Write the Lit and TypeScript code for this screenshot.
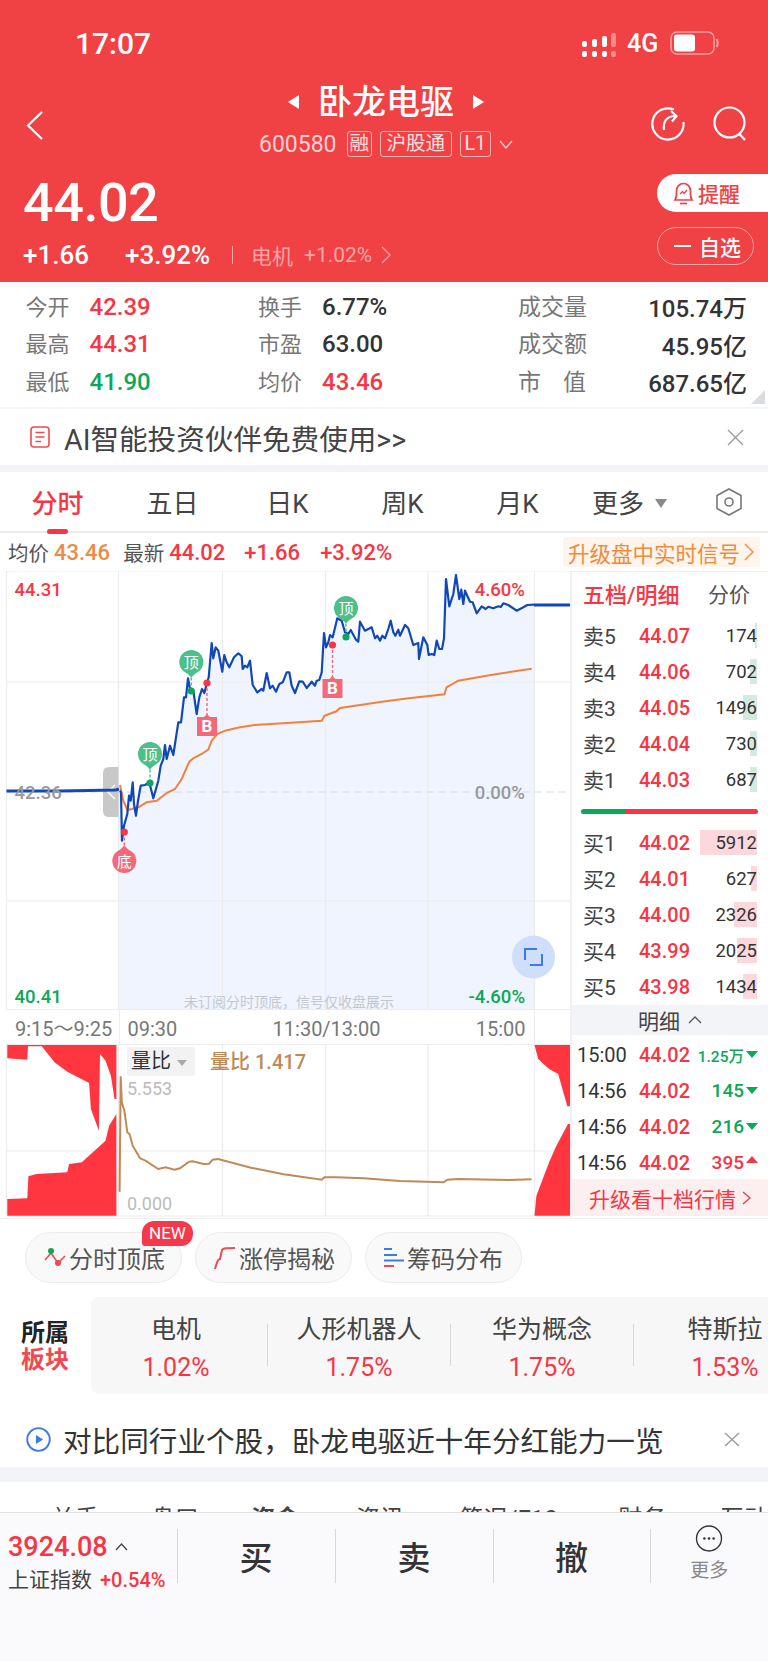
import { LitElement, css, html, svg } from 'lit'
import { customElement } from 'lit/decorators.js'

type Pt = [number, number]

// points were read from crops, each crop has its own origin and 3x scale
const seg = (ox: number, oy: number, pts: Pt[]): Pt[] => pts.map(([x, y]) => [ox + x / 3, oy + y / 3 - 572] as Pt)
const wide = (pts: Pt[], top: number): Pt[] => pts.map(([x, y]) => [x / 2.75, top + y / 3] as Pt)
const line = (pts: Pt[]) => 'M' + pts.map(([x, y]) => `${x.toFixed(1)} ${y.toFixed(1)}`).join('L')

const bluePts: Pt[] = [
  ...seg(110, 620, [[30, 515], [33, 520], [36, 665], [42, 620], [52, 585], [57, 530], [62, 545], [68, 490], [72, 555], [78, 590], [84, 545], [92, 500], [105, 498], [118, 490], [130, 538], [145, 485], [152, 440], [160, 420], [165, 378], [170, 420], [180, 380], [190, 408], [205, 310], [213, 310], [222, 235], [228, 235], [234, 178], [240, 210], [250, 215], [260, 285], [268, 235], [276, 210], [283, 222], [290, 195], [296, 175], [305, 72], [310, 118], [317, 85], [325, 95], [337, 158], [343, 108], [350, 130], [358, 145], [372, 115], [385, 103]]),
  ...seg(200, 620, [[125, 112], [128, 150], [135, 140], [142, 145], [150, 125], [158, 198], [172, 220], [185, 210], [190, 215], [200, 162], [210, 208], [218, 200], [228, 218], [238, 195], [248, 190], [260, 160], [268, 160], [275, 200], [285, 222], [298, 187], [308, 188], [320, 207], [335, 188], [345, 200], [350, 185], [358, 183], [365, 160], [372, 42], [378, 85], [385, 70]]),
  ...seg(320, 570, [[30, 198], [38, 205], [52, 148], [65, 155], [75, 190], [85, 195], [92, 183], [108, 212], [115, 218], [120, 158], [135, 185], [155, 175], [165, 208], [172, 200], [180, 215], [187, 200], [195, 208], [205, 180], [212, 155], [220, 190], [226, 200], [235, 182], [240, 200], [255, 168], [265, 178], [280, 228], [295, 222], [297, 270], [310, 205], [322, 228], [326, 258], [335, 255], [343, 258], [350, 215], [358, 240], [366, 240]]),
  ...seg(420, 570, [[72, 208], [78, 30], [88, 112], [100, 75], [108, 18], [118, 90], [124, 62], [130, 105], [135, 65], [150, 98], [158, 100], [170, 133], [185, 112], [197, 120], [205, 113], [220, 118], [235, 112], [242, 114], [250, 103], [265, 108], [290, 125], [310, 115], [322, 108], [342, 107]]),
]

const orangePts: Pt[] = [
  ...seg(110, 620, [[30, 498], [40, 545], [52, 573], [65, 570], [85, 565], [110, 550], [140, 545], [170, 522], [195, 510], [215, 480], [238, 428], [250, 418], [275, 405], [295, 392], [305, 365], [322, 345], [345, 335], [390, 325]]),
  ...wide([[700, 483], [800, 476], [885, 470], [892, 455], [925, 442], [935, 432], [990, 423], [1060, 412], [1130, 402], [1222, 391], [1228, 370], [1260, 350], [1350, 333], [1462, 314]], -7),
]

const ratioPts = wide([[329, 578], [332, 232], [335, 310], [342, 335], [350, 400], [356, 405], [365, 440], [385, 478], [400, 485], [435, 510], [455, 505], [480, 512], [495, 508], [520, 488], [530, 487], [560, 495], [575, 494], [585, 482], [600, 480], [690, 506], [780, 526], [885, 542], [892, 535], [925, 535], [1000, 538], [1100, 546], [1220, 550], [1230, 542], [1260, 540], [1400, 543], [1462, 541]], -45)

const volumeShapes: Pt[][] = [
  [[20, 138], [20, 178], [75, 182], [77, 142], [115, 142], [150, 190], [185, 218], [245, 252], [250, 330], [272, 395], [275, 165], [290, 185], [305, 230], [315, 300], [320, 300], [320, 138]],
  [[20, 650], [20, 600], [75, 598], [78, 532], [100, 525], [185, 520], [190, 495], [225, 490], [260, 455], [290, 425], [300, 380], [320, 345], [320, 650]],
  [[1470, 138], [1568, 138], [1568, 322], [1560, 322], [1535, 225], [1510, 210], [1480, 180]],
  [[1470, 650], [1475, 590], [1510, 490], [1530, 440], [1562, 375], [1568, 375], [1568, 650]],
]

const stats = [
  ['今开', '42.39', 'up', '换手', '6.77%', '', '成交量', '105.74万'],
  ['最高', '44.31', 'up', '市盈', '63.00', '', '成交额', '45.95亿'],
  ['最低', '41.90', 'down', '均价', '43.46', 'up', '市值', '687.65亿'],
]

const sells = [
  ['卖5', '44.07', '174', 2],
  ['卖4', '44.06', '702', 7],
  ['卖3', '44.05', '1496', 14],
  ['卖2', '44.04', '730', 7],
  ['卖1', '44.03', '687', 7],
]
const buys = [
  ['买1', '44.02', '5912', 57],
  ['买2', '44.01', '627', 6],
  ['买3', '44.00', '2326', 23],
  ['买4', '43.99', '2025', 20],
  ['买5', '43.98', '1434', 14],
]
const ticks = [
  ['15:00', '1.25万', 'down', true],
  ['14:56', '145', 'down', false],
  ['14:56', '216', 'down', false],
  ['14:56', '395', 'up', false],
]
const sectors = [
  ['电机', '1.02%'],
  ['人形机器人', '1.75%'],
  ['华为概念', '1.75%'],
  ['特斯拉', '1.53%'],
]
const lowerTabs = ['关手', '盘口', '资金', '资讯', '简况/F10', '财务', '互动']

const pin = (x: number, cy: number, dot: number, label: string, color: string, dotColor: string) => {
  const up = dot > cy
  const tip = up ? cy + 15.5 : cy - 15.5
  return svg`
    <line x1=${x} y1=${tip} x2=${x} y2=${dot} stroke=${color} stroke-width="1.4" stroke-dasharray="3 2"></line>
    <circle cx=${x} cy=${dot} r="3.6" fill=${dotColor}></circle>
    <circle cx=${x} cy=${cy} r="12" fill=${color}></circle>
    <path d="M${x - 5} ${cy + (up ? 10.5 : -10.5)}L${x} ${tip}L${x + 5} ${cy + (up ? 10.5 : -10.5)}Z" fill=${color}></path>
    <text class="pin" x=${x} y=${cy + 5.5}>${label}</text>`
}

const flag = (x: number, top: number, dot: number) => svg`
  <line x1=${x} y1=${dot} x2=${x} y2=${top} stroke="#f4697a" stroke-width="1.4" stroke-dasharray="3 2"></line>
  <circle cx=${x} cy=${dot} r="3.6" fill="#f73545"></circle>
  <path d="M${x - 10} ${top + 1}H${x - 3}L${x} ${top - 2}L${x + 3} ${top + 1}H${x + 10}V${top + 20}H${x - 10}Z" fill="#f4697a"></path>
  <text class="pin b" x=${x} y=${top + 16}>B</text>`

@customElement('app-root')
class AppRoot extends LitElement {
  renderChart() {
    const y = (v: number) => v - 572
    const area = line(bluePts) + `L534.5 439L118.5 439L118.5 ${bluePts[0][1].toFixed(1)}Z`
    return html`
      <svg class="plot" viewBox="0 0 570 439" width="570" height="439">
        <path d=${area} fill="#eff4fe"></path>
        <g stroke="#ececec" stroke-width="1.2">
          <path d="M6.5 0V439M118.5 0V439M222.5 0V439M325.5 0V439M428 0V439M534.5 0V439" fill="none"></path>
          <path d="M6.5 0H570M6.5 ${y(683)}H570M6.5 ${y(902)}H570M6.5 438.5H570" fill="none"></path>
        </g>
        <path d="M6.5 ${y(793)}H570" stroke="#cfdbe8" stroke-width="1.2" stroke-dasharray="7 5"></path>
        <path d="M103 ${y(774)}q0 -6 6 -6h9.5v50h-9.5q-6 0 -6 -6Z" fill="#c8c8c8"></path>
        <path d="M115 ${y(786)}l-7 7l7 7" fill="none" stroke="#fff" stroke-width="1.4"></path>
        <path d=${line(orangePts)} fill="none" stroke="#f77f3c" stroke-width="2"></path>
        <path d=${line(bluePts)} fill="none" stroke="#1148b8" stroke-width="2.2" stroke-linejoin="round"></path>
        <path d="M6.5 ${y(792)}L60 ${y(792)}L116 ${y(791)}L119 ${y(790)}M534 ${y(606)}H570" fill="none" stroke="#1148b8" stroke-width="3.2"></path>
        ${pin(150, y(755), y(784), '顶', '#4cbf8b', '#0aa858')}
        ${pin(191.3, y(663), y(692), '顶', '#4cbf8b', '#0aa858')}
        ${pin(346, y(609), y(638), '顶', '#4cbf8b', '#0aa858')}
        ${pin(124.3, y(862), y(833), '底', '#f4697a', '#f73545')}
        ${flag(207, y(717), y(684))}
        ${flag(332.5, y(679), y(646))}
        <circle cx="533.5" cy=${y(958)} r="21.5" fill="#cfdffb"></circle>
        <path d="M525 ${y(961)}V${y(950)}H537M542 ${y(955)}V${y(966)}H530" fill="none" stroke="#3a7be8" stroke-width="2"></path>
      </svg>
      <span class="tag up" style="left:14.5px;top:7px">44.31</span>
      <span class="tag gray" style="left:14.5px;top:210px">42.36</span>
      <span class="tag down" style="left:14.5px;top:414px">40.41</span>
      <span class="tag up end" style="top:7px">4.60%</span>
      <span class="tag gray end" style="top:210px">0.00%</span>
      <span class="tag down end" style="top:414px">-4.60%</span>
      <span class="hint">未订阅分时顶底，信号仅收盘展示</span>
    `
  }

  renderVolume() {
    return html`
      <svg class="plot" viewBox="0 0 570 173" width="570" height="173">
        <g stroke="#ececec" stroke-width="1.2" fill="none">
          <path d="M6.5 0V172M118.5 0V172M222.5 0V172M325.5 0V172M428 0V172M534.5 0V172"></path>
          <path d="M6.5 0.5H570M6.5 107H570M6.5 172H570"></path>
        </g>
        ${volumeShapes.map(
          s => svg`<path d=${line(wide(s, -45)) + 'Z'} fill="#ff363f"></path>`
        )}
        <path d=${line(ratioPts)} fill="none" stroke="#c08a55" stroke-width="2"></path>
      </svg>
      <div class="ratio-chip">量比<i></i></div>
      <span class="ratio-value">量比 1.417</span>
      <span class="ratio-tick" style="top:35px">5.553</span>
      <span class="ratio-tick" style="top:150px">0.000</span>
    `
  }

  renderQuote(rows: any[]) {
    return rows.map(
      r => html`<div class="quote">
        <i class=${r[0][0] === '卖' ? 'depth sell' : 'depth buy'} style="width:${r[3]}px"></i>
        <span class="q-label">${r[0]}</span>
        <span class="q-price">${r[1]}</span>
        <span class="q-vol">${r[2]}</span>
      </div>`
    )
  }

  render() {
    return html`
      <header>
        <div class="status">
          <span class="time">17:07</span>
          <svg class="signal" width="34" height="26" viewBox="0 0 34 26" fill="#fff">
            <rect x="0" y="8" width="5" height="6" rx="2"></rect>
            <rect x="0" y="18" width="5" height="6" rx="2"></rect>
            <rect x="10" y="6" width="5" height="8" rx="2"></rect>
            <rect x="10" y="18" width="5" height="6" rx="2"></rect>
            <rect x="20" y="3" width="5" height="11" rx="2"></rect>
            <rect x="20" y="18" width="5" height="6" rx="2"></rect>
            <rect x="29" y="0" width="5" height="14" rx="2" fill="#f78a8c"></rect>
            <rect x="29" y="18" width="5" height="6" rx="2" fill="#f78a8c"></rect>
          </svg>
          <span class="net">4G</span>
          <svg class="battery" width="50" height="24" viewBox="0 0 50 24">
            <rect x="1" y="1" width="43" height="22" rx="6" fill="none" stroke="#f8a0a2" stroke-width="1.5"></rect>
            <rect x="4" y="3.5" width="21" height="17" rx="3" fill="#fff"></rect>
            <path d="M46.5 8q2.5 4 0 8" fill="none" stroke="#f8a0a2" stroke-width="2"></path>
          </svg>
        </div>
        <div class="nav">
          <svg class="back" width="18" height="29" viewBox="0 0 18 29" fill="none" stroke="#fff" stroke-width="2.2">
            <path d="M16 1L2 14.5L16 28"></path>
          </svg>
          <div class="name-box">
            <div class="name">
              <i class="arrow a-left"></i>
              <span>卧龙电驱</span>
              <i class="arrow a-right"></i>
            </div>
            <div class="code">
              <span class="code-num">600580</span>
              <span class="code-tag">融</span>
              <span class="code-tag t3">沪股通</span>
              <span class="code-tag t1">L1</span>
              <svg width="14" height="9" viewBox="0 0 14 9" fill="none" stroke="#fbd0d1" stroke-width="1.3">
                <path d="M1 1L7 8L13 1"></path>
              </svg>
            </div>
          </div>
          <div class="nav-tools">
            <svg width="36" height="36" viewBox="0 0 36 36" fill="none" stroke="#fff" stroke-width="2.2">
              <path d="M24 3.6A15.6 15.6 0 1 0 33.4 16"></path>
              <path d="M14 24C13 16 16 10.5 25 10"></path>
              <path d="M21 5L26.5 10L22 15.5"></path>
            </svg>
            <svg width="36" height="36" viewBox="0 0 36 36" fill="none" stroke="#fff" stroke-width="2.2">
              <circle cx="17.5" cy="16.5" r="15"></circle>
              <path d="M27.5 28L33 34"></path>
            </svg>
          </div>
        </div>
        <div class="price-row">
          <div>
            <div class="price">44.02</div>
            <div class="change">
              <span class="c1">+1.66</span>
              <span class="c2">+3.92%</span>
              <i class="c-sep"></i>
              <span class="c3">电机</span>
              <span class="c4">+1.02%</span>
              <svg width="10" height="18" viewBox="0 0 10 18" fill="none" stroke="#f8a5a6" stroke-width="1.3">
                <path d="M1 1L9 9L1 17"></path>
              </svg>
            </div>
          </div>
          <div class="actions">
            <div class="remind">
              <svg width="21" height="23" viewBox="0 0 21 23" fill="none" stroke="#f04144" stroke-width="1.7">
                <path d="M2 18C4 15 3.5 11 3.5 9C3.5 4.5 6.5 1.5 10.5 1.5S17.5 4.5 17.5 9C17.5 11 17 15 19 18Z"></path>
                <path d="M7 21.5H14"></path>
                <path d="M7 12L9.5 9.5L11 11.5L14 8" stroke-width="1.2"></path>
              </svg>
              提醒
            </div>
            <div class="watch"><i></i>自选</div>
          </div>
        </div>
      </header>

      <section class="stats">
        ${stats.map(
          s => html`<div class="stat-row">
            <div class="stat"><span class="s-label">${s[0]}</span><span class="s-val ${s[2]}">${s[1]}</span></div>
            <div class="stat"><span class="s-label">${s[3]}</span><span class="s-val ${s[5]}">${s[4]}</span></div>
            <div class="stat third">
              <span class="s-label wide">${s[6] === '市值' ? html`<b>市</b><b>值</b>` : s[6]}</span>
              <span class="s-val">${s[7]}</span>
            </div>
          </div>`
        )}
        <i class="corner"></i>
      </section>

      <div class="notice ai">
        <svg width="20" height="22" viewBox="0 0 20 22" fill="none" stroke="#f04a50" stroke-width="1.6">
          <rect x="1" y="1" width="18" height="20" rx="3"></rect>
          <path d="M5.5 6.5H14.5M5.5 11H14.5M5.5 15.5H11"></path>
        </svg>
        <span class="grow">AI智能投资伙伴免费使用>></span>
        <svg class="close" width="17" height="17" viewBox="0 0 17 17" stroke="#999" stroke-width="1.3">
          <path d="M1 1L16 16M16 1L1 16"></path>
        </svg>
      </div>
      <div class="band b7"></div>

      <nav class="tabs">
        <span class="tab on">分时</span>
        <span class="tab">五日</span>
        <span class="tab">日K</span>
        <span class="tab">周K</span>
        <span class="tab">月K</span>
        <span class="more">更多<i></i></span>
        <svg class="hex" width="26" height="28" viewBox="0 0 26 28" fill="none" stroke="#777" stroke-width="1.6">
          <path d="M13 1L25 7.5V20.5L13 27L1 20.5V7.5Z"></path>
          <circle cx="13" cy="14" r="4"></circle>
        </svg>
      </nav>

      <div class="summary">
        <span class="lab">均价</span><span class="num or">43.46</span>
        <span class="lab gap">最新</span><span class="num up">44.02</span>
        <span class="num up g1">+1.66</span>
        <span class="num up g2">+3.92%</span>
        <span class="signal-up">升级盘中实时信号
          <svg width="10" height="18" viewBox="0 0 10 18" fill="none" stroke="#f08a3c" stroke-width="1.4">
            <path d="M1 1L9 9L1 17"></path>
          </svg>
        </span>
      </div>

      <section class="board">
        <div class="plots">
          <div class="chart">${this.renderChart()}</div>
          <div class="axis">
            <div class="a-pre">9:15～9:25</div>
            <div class="a-main"><span>09:30</span><span>11:30/13:00</span><span>15:00</span></div>
            <div class="a-post"></div>
          </div>
          <div class="volume">${this.renderVolume()}</div>
        </div>
        <aside class="panel">
          <div class="p-head"><span>五档/明细</span><span>分价</span></div>
          ${this.renderQuote(sells)}
          <div class="ratio"><i></i></div>
          ${this.renderQuote(buys)}
          <div class="detail">明细
            <svg width="14" height="8" viewBox="0 0 14 8" fill="none" stroke="#555" stroke-width="1.3">
              <path d="M1 7L7 1L13 7"></path>
            </svg>
          </div>
          ${ticks.map(
            t => html`<div class="tick">
              <span class="t-time">${t[0]}</span>
              <span class="q-price">44.02</span>
              <span class="t-vol ${t[2]} ${t[3] ? 'small' : ''}">${t[1]}</span>
              <i class="t-arrow ${t[2]}"></i>
            </div>`
          )}
          <div class="upgrade">升级看十档行情
            <svg width="9" height="14" viewBox="0 0 9 14" fill="none" stroke="#f73545" stroke-width="1.3">
              <path d="M1 1L8 7L1 13"></path>
            </svg>
          </div>
        </aside>
      </section>

      <div class="pills">
        <div class="pill">
          <span class="new">NEW</span>
          <svg width="22" height="24" viewBox="0 0 22 24" fill="none" stroke="#f04a50" stroke-width="1.6">
            <path d="M1 14L7 7L14 17L21 10"></path>
            <circle cx="7" cy="5" r="3" fill="#0aa858" stroke="none"></circle>
            <circle cx="14" cy="17" r="3" fill="#f04a50" stroke="none"></circle>
          </svg>
          分时顶底
        </div>
        <div class="pill">
          <svg width="22" height="24" viewBox="0 0 22 24" fill="none" stroke="#f04a50" stroke-width="2">
            <path d="M1 23C3 16 4 13 6 13L8 4C9 2 14 2 21 2"></path>
          </svg>
          涨停揭秘
        </div>
        <div class="pill">
          <svg width="20" height="24" viewBox="0 0 20 24" fill="none" stroke-width="2">
            <path d="M0 3H8M0 9H13" stroke="#3a7be8"></path>
            <path d="M0 14.5H20" stroke="#3a7be8"></path>
            <path d="M0 20H10" stroke="#f04a50"></path>
          </svg>
          筹码分布
        </div>
      </div>

      <section class="sector">
        <div class="s-title"><div>所属</div><div class="red">板块</div></div>
        <div class="s-card">
          ${sectors.map(
            s => html`<div class="s-item"><div class="s-name">${s[0]}</div><div class="s-pct">${s[1]}</div></div>`
          )}
        </div>
      </section>

      <div class="notice compare">
        <svg width="25" height="25" viewBox="0 0 25 25" fill="none" stroke="#3a7be8" stroke-width="1.8">
          <circle cx="12.5" cy="12.5" r="11.3"></circle>
          <path d="M10 8L17 12.5L10 17Z" fill="#3a7be8" stroke="none"></path>
        </svg>
        <span class="grow">对比同行业个股，卧龙电驱近十年分红能力一览</span>
        <svg class="close" width="16" height="15" viewBox="0 0 16 15" stroke="#999" stroke-width="1.3">
          <path d="M1 1L15 14M15 1L1 14"></path>
        </svg>
      </div>
      <div class="band b15"></div>

      <div class="lower-tabs">
        ${lowerTabs.map((t, i) => html`<span class=${i === 2 ? 'active' : ''}>${t}</span>`)}
      </div>

      <footer>
        <div class="f-index">
          <div class="f-top"><span>3924.08</span>
            <svg width="13" height="8" viewBox="0 0 13 8" fill="none" stroke="#444" stroke-width="1.3">
              <path d="M1 7L6.5 1L12 7"></path>
            </svg>
          </div>
          <div class="f-sub">上证指数<span>+0.54%</span></div>
        </div>
        <div class="f-btn">买</div>
        <div class="f-btn">卖</div>
        <div class="f-btn">撤</div>
        <div class="f-more">
          <svg width="32" height="32" viewBox="0 0 32 32" fill="none" stroke="#333" stroke-width="1.6">
            <circle cx="16" cy="16" r="14.8"></circle>
            <g fill="#333" stroke="none"><circle cx="10.5" cy="16" r="1.5"></circle><circle cx="16" cy="16" r="1.5"></circle><circle cx="21.5" cy="16" r="1.5"></circle></g>
          </svg>
          <span>更多</span>
        </div>
      </footer>
    `
  }

  static styles = css`
    :host {
      display: block;
      width: 768px;
      height: 1662px;
      overflow: hidden;
      background: #fff;
      color: #333;
      font-family: Roboto, 'Noto Sans CJK SC', sans-serif;
    }
    i { font-style: normal; display: block; }
    .up { color: #f73545; }
    .down { color: #0aa858; }

    header { background: #f04144; height: 282px; color: #fff; }
    .status { height: 86px; display: flex; align-items: center; padding-left: 75px; }
    .time { font-size: 30px; font-weight: 500; width: 507px; }
    .signal { margin-top: 6px; }
    .net { font-size: 25px; font-weight: 500; margin-left: 11px; width: 43px; }
    .nav { height: 74px; display: grid; grid-template-columns: 258px 256px 254px; }
    .back { margin: 25px 0 0 26px; }
    .name-box { display: flex; flex-direction: column; align-items: center; }
    .name { display: flex; align-items: center; gap: 19px; height: 32px; font-size: 34px; line-height: 32px; font-weight: 500; white-space: nowrap; }
    .arrow { width: 0; height: 0; border-top: 7.5px solid transparent; border-bottom: 7.5px solid transparent; }
    .a-left { border-right: 11px solid #fff; }
    .a-right { border-left: 11px solid #fff; }
    .code { display: flex; align-items: center; gap: 8px; margin-top: 13px; height: 26px; white-space: nowrap; color: #fde0e0; }
    .code-num { font-size: 23px; color: #fbd0d1; margin-right: 2px; }
    .code-tag { border: 1px solid #f9b5b6; border-radius: 3px; font-size: 19.5px; line-height: 24px; padding: 0 2px; }
    .code-tag.t3 { padding: 0 5.5px; }
    .code-tag.t1 { padding: 0 4px; }
    .nav-tools { display: flex; gap: 26px; padding: 20px 0 0 136px; }
    .price-row { height: 122px; display: flex; justify-content: space-between; padding-left: 23px; }
    .price { font-size: 54px; line-height: 56px; font-weight: 500; margin-top: 15px; letter-spacing: -0.5px; }
    .change { display: flex; align-items: center; height: 26px; margin-top: 11px; white-space: nowrap; }
    .c1 { font-size: 26px; width: 102px; font-weight: 500; }
    .c2 { font-size: 26px; width: 107px; font-weight: 500; }
    .c-sep { width: 1px; height: 18px; background: #f8a5a6; margin-right: 18px; }
    .c3 { font-size: 21px; color: #f8a5a6; width: 53px; }
    .c4 { font-size: 21px; color: #f8a5a6; width: 77px; }
    .actions { width: 111px; padding-top: 14px; display: flex; flex-direction: column; gap: 15px; }
    .remind { height: 38px; background: #fff; border-radius: 19px 0 0 19px; color: #f04144; font-size: 21px; font-weight: 500; display: flex; align-items: center; gap: 4px; padding-left: 16px; }
    .watch { width: 97px; height: 38px; box-sizing: border-box; border: 1px solid #f8a5a6; border-radius: 19px; display: flex; align-items: center; font-size: 21px; gap: 8px; padding-left: 16px; font-weight: 500; }
    .watch i { width: 17px; height: 2px; background: #fff; }

    .stats { position: relative; height: 119px; padding-top: 6px; border-bottom: 2px solid #f3f4f8; }
    .stat-row { display: grid; grid-template-columns: 232.5px 260px 229px; height: 37.5px; padding-left: 25.5px; }
    .stat { display: flex; align-items: center; white-space: nowrap; }
    .s-label { font-size: 22px; color: #777; width: 64px; position: relative; top: -2px; }
    .s-val { font-size: 24px; font-weight: 500; }
    .third { justify-content: space-between; }
    .s-label.wide { font-size: 23px; width: 68px; display: flex; justify-content: space-between; }
    .s-label b { font-weight: 400; }
    .corner { position: absolute; right: 3px; bottom: 3px; width: 0; height: 0; border-left: 14px solid transparent; border-bottom: 14px solid #d9dde2; }

    .notice { display: flex; align-items: center; box-sizing: border-box; font-size: 28.6px; color: #444; white-space: nowrap; }
    .grow { flex: 1; }
    .ai { height: 56px; padding-left: 30px; gap: 14px; }
    .ai .close { margin-right: 24px; }
    .band { background: #f3f4f8; }
    .b7 { height: 7px; }
    .b15 { height: 15px; }

    .tabs { height: 59px; border-bottom: 2px solid #ececec; display: flex; align-items: center; font-size: 26px; color: #444; white-space: nowrap; }
    .tab { position: relative; width: 115px; text-align: center; }
    .tab.on { color: #f73545; font-weight: 500; }
    .tab.on::after { content: ''; position: absolute; left: 47px; width: 21px; bottom: -14px; height: 5px; border-radius: 3px; background: #f73545; }
    .more { margin-left: 17px; width: 124px; display: flex; align-items: center; gap: 11px; }
    .more i { border-left: 6px solid transparent; border-right: 6px solid transparent; border-top: 9px solid #8a8a8a; margin-top: 3px; }

    .summary { height: 38px; display: flex; align-items: center; padding-left: 8px; white-space: nowrap; }
    .lab { font-size: 20.5px; color: #555; }
    .num { font-size: 22px; font-weight: 500; margin-left: 5px; }
    .or { color: #ee8a45; }
    .gap { margin-left: 13px; }
    .g1 { margin-left: 19px; }
    .g2 { margin-left: 20px; }
    .signal-up { margin-left: auto; margin-right: 8px; height: 30px; width: 197px; box-sizing: border-box; padding-left: 5px; background: #fff5ec; color: #f08a3c; font-size: 21.5px; border-radius: 3px; display: flex; align-items: center; gap: 4px; }

    .board { display: flex; height: 647px; }
    .plots { width: 570px; }
    .chart { position: relative; height: 439px; }
    .plot { position: absolute; left: 0; top: 0; display: block; }
    .pin { fill: #fff; font-size: 15px; text-anchor: middle; font-family: 'Noto Sans CJK SC', sans-serif; }
    .pin.b { font-size: 17px; font-weight: 700; font-family: Roboto, sans-serif; }
    .tag { position: absolute; font-size: 18.5px; line-height: 24px; font-weight: 500; }
    .tag.end { right: 45px; }
    .gray { color: #999; }
    .hint { position: absolute; left: 184px; top: 422px; font-size: 14px; line-height: 18px; color: #c4c8ce; white-space: nowrap; }

    .axis { height: 34px; display: flex; font-size: 20px; color: #777; white-space: nowrap; align-items: stretch; line-height: 38px; }
    .a-pre { width: 103.5px; padding-left: 15px; }
    .a-main { width: 416px; box-sizing: border-box; border-left: 1.2px solid #ececec; border-right: 1.2px solid #ececec; display: flex; justify-content: space-between; padding: 0 8px 0 8px; }
    .volume { position: relative; height: 174px; }
    .ratio-chip { position: absolute; left: 127px; top: 3px; width: 68px; height: 29px; box-sizing: border-box; padding-left: 4px; background: #f2f2f2; border-radius: 3px; font-size: 20px; line-height: 29px; color: #333; display: flex; align-items: center; gap: 6px; }
    .ratio-chip i { border-left: 5px solid transparent; border-right: 5px solid transparent; border-top: 6px solid #aaa; margin-top: 2px; }
    .ratio-value { position: absolute; left: 210px; top: 4px; font-size: 20px; line-height: 28px; color: #c08a55; white-space: nowrap; font-weight: 500; }
    .ratio-tick { position: absolute; left: 127px; font-size: 18px; line-height: 20px; color: #bbb; }

    .panel { width: 198px; box-sizing: border-box; border-left: 2px solid #eef0f3; border-top: 1px solid #ececec; }
    .p-head { height: 46px; display: flex; justify-content: space-between; align-items: center; padding: 0 18px 4px 11px; box-sizing: border-box; font-size: 21px; color: #555; }
    .p-head span:first-child { color: #f73545; font-size: 22px; font-weight: 500; }
    .quote { position: relative; height: 36px; display: flex; align-items: center; padding-left: 11px; font-size: 21px; }
    .depth { position: absolute; right: 11px; top: 5px; height: 25px; }
    .sell { background: #d4eadf; }
    .buy { background: #fcd8dc; }
    .q-label { width: 56px; position: relative; color: #444; top: -1px; }
    .q-price { position: relative; font-size: 20px; width: 52px; color: #f73545; font-weight: 500; }
    .q-vol { position: relative; margin-left: auto; margin-right: 11px; font-size: 18.5px; color: #333; }
    .ratio { height: 27px; display: flex; align-items: center; padding-left: 9px; }
    .ratio i { width: 177px; height: 5px; border-radius: 3px; background: linear-gradient(105deg, #0aa858 0 25%, #f73545 25%); }
    .detail { height: 30px; background: #f3f4f8; display: flex; align-items: center; justify-content: center; gap: 8px; font-size: 21px; color: #444; }
    .tick { height: 36px; box-sizing: border-box; padding: 3px 0 0 5px; display: flex; align-items: center; font-size: 21px; white-space: nowrap; }
    .t-time { width: 62px; color: #333; font-size: 20px; }
    .t-vol { margin-left: auto; font-size: 19px; font-weight: 500; }
    .t-vol.small { font-size: 15.5px; }
    .t-arrow { width: 0; height: 0; margin: 0 10px 0 2px; border-left: 6.5px solid transparent; border-right: 6.5px solid transparent; }
    .t-arrow.down { border-top: 7px solid #0aa858; color: #0aa858; }
    .t-arrow.up { border-bottom: 7px solid #f73545; margin-top: -6px; }
    .upgrade { height: 37px; background: #fdeff0; color: #f73545; font-size: 21px; display: flex; align-items: center; padding-left: 17px; gap: 6px; white-space: nowrap; }

    .pills { height: 79px; box-sizing: border-box; display: flex; gap: 13px; padding: 13px 0 0 25px; border-top: 1px solid #eee; }
    .pill { position: relative; width: 157px; height: 51px; box-sizing: border-box; border: 1px solid #ececec; border-radius: 26px; background: #f9f9f9; display: flex; align-items: center; gap: 3px; padding-left: 18px; font-size: 24px; color: #555; white-space: nowrap; }
    .new { position: absolute; left: 116px; top: -12px; width: 51px; height: 25px; background: #f5384a; color: #fff; font-size: 17px; line-height: 25px; text-align: center; border-radius: 12px 12px 12px 3px; }

    .sector { height: 97px; display: flex; align-items: stretch; padding-left: 21px; }
    .s-title { width: 69.5px; font-size: 24px; line-height: 27px; font-weight: 700; color: #222; padding-top: 23px; }
    .red { color: #f04a50; }
    .s-card { flex: 1; min-width: 0; overflow: hidden; background: #f7f7f7; border-radius: 8px 0 0 8px; display: flex; }
    .s-item { flex: 0 0 183px; position: relative; text-align: center; white-space: nowrap; margin-left: -6px; margin-right: 6px; padding-top: 16px; }
    .s-item:not(:last-child)::after { content: ''; position: absolute; right: 0; top: 27px; height: 42px; width: 1px; background: #d8d8d8; }
    .s-name { font-size: 25px; line-height: 34px; color: #444; }
    .s-pct { font-size: 25px; line-height: 36px; color: #f73545; margin-top: 3px; }

    .compare { height: 73px; padding: 17px 0 0 26px; gap: 12px; color: #333; }
    .compare .close { margin-right: 28px; }

    .lower-tabs { height: 29.5px; overflow: hidden; font-size: 24px; color: #444; white-space: nowrap; display: flex; padding: 25px 0 0 51px; box-sizing: border-box; }
    .lower-tabs span { line-height: 24px; }
    .lower-tabs span:nth-child(1) { width: 101px; }
    .lower-tabs span:nth-child(2) { width: 102px; }
    .lower-tabs span:nth-child(3) { width: 106px; }
    .lower-tabs span:nth-child(4) { width: 105px; }
    .lower-tabs span:nth-child(5) { width: 161px; }
    .lower-tabs span:nth-child(6) { width: 103px; }
    .active { font-weight: 700; }

    footer { height: 149.5px; box-sizing: border-box; border-top: 1.5px solid #e2e2e2; background: #fafafc; display: grid; grid-template-columns: 176.5px 158px 158px 157px 118.5px; padding-top: 16px; align-items: start; }
    .f-index { height: 54px; padding-left: 8px; white-space: nowrap; }
    .f-top { display: flex; align-items: center; gap: 7px; font-size: 27px; line-height: 36px; color: #f73545; font-weight: 500; }
    .f-sub { display: flex; align-items: center; gap: 8px; font-size: 21px; line-height: 30px; color: #444; }
    .f-sub span { color: #f73545; font-size: 20px; font-weight: 500; }
    .f-btn { height: 54px; box-sizing: border-box; border-left: 1px solid #d8d8d8; display: flex; align-items: center; justify-content: center; font-size: 33px; font-weight: 500; color: #333; }
    .f-more { height: 54px; box-sizing: border-box; border-left: 1px solid #d8d8d8; display: flex; flex-direction: column; align-items: center; margin-top: 0; color: #888; font-size: 19px; line-height: 24px; }
    .f-more svg { margin-top: -4px; }
    .f-more span { margin-top: 7px; }
  `
}
